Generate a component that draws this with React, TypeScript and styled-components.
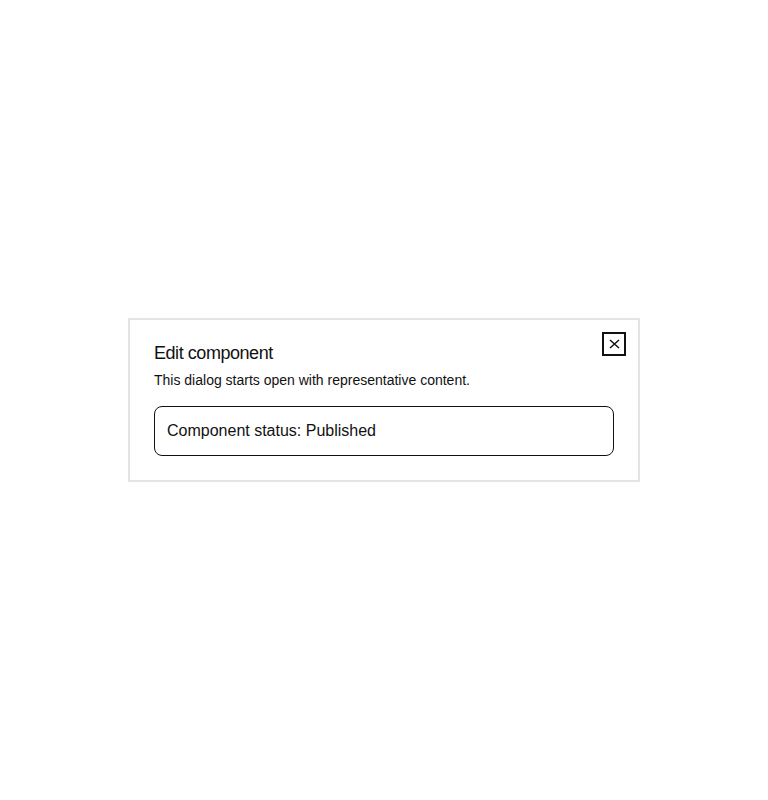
import React from "react";
import styled, { createGlobalStyle } from "styled-components";

const GlobalStyle = createGlobalStyle`
  html, body {
    margin: 0;
    padding: 0;
    background: #ffffff;
    font-family: "Liberation Sans", Arial, sans-serif;
    color: #111111;
  }
`;

const App: React.FC = () => {
  return (
    <>
      <GlobalStyle />
      <Page>
        <Dialog role="dialog" aria-labelledby="dlg-title">
          <CloseButton aria-label="Close">
            <svg width="11" height="10" viewBox="0 0 11 10">
              <path d="M1 1L10 9M10 1L1 9" stroke="#111" strokeWidth="1.5" />
            </svg>
          </CloseButton>
          <Title id="dlg-title">Edit component</Title>
          <Description>This dialog starts open with representative content.</Description>
          <StatusBox>Component status: Published</StatusBox>
        </Dialog>
      </Page>
    </>
  );
};

export default App;

const Page = styled.main`
  min-height: 100vh;
  display: flex;
  align-items: center;
  justify-content: center;
`;

const Dialog = styled.section`
  position: relative;
  width: 512px;
  box-sizing: border-box;
  border: 2px solid #e4e4e4;
  background: #fff;
  padding: 24px;
  display: flex;
  flex-direction: column;
`;

const CloseButton = styled.button`
  position: absolute;
  top: 12px;
  right: 12px;
  width: 24px;
  height: 24px;
  box-sizing: border-box;
  border: 2px solid #111;
  background: #fff;
  padding: 0;
  display: flex;
  align-items: center;
  justify-content: center;
  cursor: pointer;
`;

const Title = styled.h2`
  margin: 0;
  font-size: 18px;
  line-height: 18px;
  font-weight: 400;
  letter-spacing: -0.025em;
`;

const Description = styled.p`
  margin: 8px 0 16px;
  font-size: 14px;
  line-height: 20px;
`;

const StatusBox = styled.div`
  border: 1px solid #111;
  border-radius: 8px;
  padding: 12px;
  font-size: 16px;
  line-height: 24px;
`;
